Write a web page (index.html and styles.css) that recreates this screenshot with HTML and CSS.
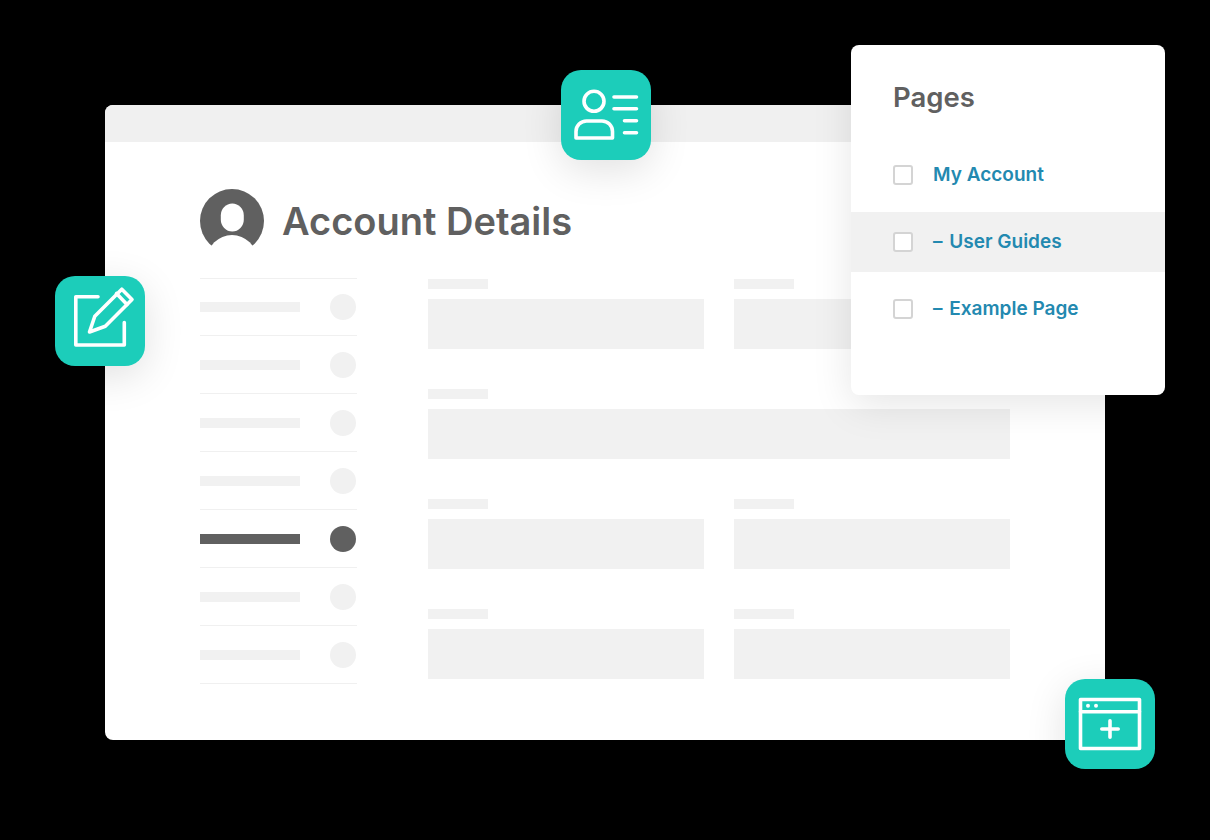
FILE: index.html
```html
<!DOCTYPE html>
<html lang="en">

<head>
  <meta charset="UTF-8" />
  <title>Account Details</title>
  <link rel="stylesheet" href="styles.css">
</head>

<body>
  <div class="stage">
    <main class="window">
      <div class="window-bar"></div>
      <div class="window-body">
        <header class="account-head">
          <svg class="avatar" viewBox="0 0 64 64">
            <circle cx="32" cy="32" r="32" fill="#606060" />
            <rect x="20.800" y="14.500" width="23" height="28" rx="11.500" ry="12" fill="#fff" />
            <circle cx="32" cy="71" r="25" fill="#fff" />
          </svg>
          <h1>Account Details</h1>
        </header>
        <div class="account-content">
          <ul class="side-list">
            <li><span class="side-bar"></span><span class="side-dot"></span></li>
            <li><span class="side-bar"></span><span class="side-dot"></span></li>
            <li><span class="side-bar"></span><span class="side-dot"></span></li>
            <li><span class="side-bar"></span><span class="side-dot"></span></li>
            <li class="active"><span class="side-bar"></span><span class="side-dot"></span></li>
            <li><span class="side-bar"></span><span class="side-dot"></span></li>
            <li><span class="side-bar"></span><span class="side-dot"></span></li>
          </ul>
          <div class="form-grid">
            <div class="field"><span class="field-label"></span><span class="field-input"></span></div>
            <div class="field"><span class="field-label"></span><span class="field-input"></span></div>
            <div class="field wide"><span class="field-label"></span><span class="field-input"></span></div>
            <div class="field"><span class="field-label"></span><span class="field-input"></span></div>
            <div class="field"><span class="field-label"></span><span class="field-input"></span></div>
            <div class="field"><span class="field-label"></span><span class="field-input"></span></div>
            <div class="field"><span class="field-label"></span><span class="field-input"></span></div>
          </div>
        </div>
      </div>
    </main>

    <!-- Floating panel -->
    <aside class="pages-panel">
      <h2>Pages</h2>
      <ul class="pages-list">
        <li><span class="check"></span><span class="page-name">My Account</span></li>
        <li class="hover"><span class="check"></span><span class="page-name"><span class="dash">– </span>User Guides</span></li>
        <li><span class="check"></span><span class="page-name"><span class="dash">– </span>Example Page</span></li>
      </ul>
    </aside>

    <!-- Floating icons -->
    <div class="badge badge-user">
      <svg viewBox="0 0 90 90">
        <circle cx="33" cy="31.3" r="10" />
        <path d="M15 68V61.5a10.500 10.500 0 0 1 10.500-10.500h15.500a10.500 10.500 0 0 1 10.500 10.500V68z" />
        <path d="M53 27H75.500M53 38.700H75.500M63.500 50.700H75.500M63.500 62.700H75.500" />
      </svg>
    </div>
    <div class="badge badge-edit">
      <svg viewBox="0 0 90 90">
        <path d="M43 20.800H20.800V69H69.300V46.500" />
        <path d="M34.500 56L39.800 40.200L66.800 13.200L77 23.500L50.300 50.300z" />
        <path d="M61.500 17.500L72 28.500" />
      </svg>
    </div>
    <div class="badge badge-add">
      <svg viewBox="0 0 90 90">
        <rect x="15.500" y="20.500" width="59" height="49" />
        <path d="M15.500 32.700H74.500M45 41.800V58.200M36.800 50H53.200" />
        <circle class="dot" cx="23" cy="26.700" r="2" />
        <circle class="dot" cx="31" cy="26.700" r="2" />
      </svg>
    </div>
  </div>
</body>

</html>
```

FILE: styles.css
```css
* { margin: 0; padding: 0; box-sizing: border-box; }
html, body { height: 100%; }
body {
  background-color: #000;
  color: #606060;
  font-family: Inter, "Open Sans", sans-serif;
  overflow: hidden;
}
ul { list-style: none; }
.stage {
  position: relative;
  width: 1210px;
  height: 840px;
  padding: 105px 105px 100px;
}
.window {
  height: 635px;
  background-color: #fff;
  border-radius: 8px;
  overflow: hidden;
}
.window-bar {
  height: 37px;
  background-color: #f0f0f0;
}
.window-body { padding: 47px 95px 0; }
.account-head {
  display: flex;
  align-items: center;
  gap: 18px;
  height: 64px;
}
.avatar { width: 64px; height: 64px; display: block; }
.account-head h1 {
  font-size: 38px;
  font-weight: 600;
  line-height: 64px;
}
.account-content {
  display: flex;
  align-items: flex-start;
  margin-top: 25px;
}
.side-list {
  width: 157px;
  border-top: 1px solid #f0f0f0;
}
.side-list li {
  display: flex;
  align-items: center;
  justify-content: space-between;
  height: 58px;
  padding-right: 1px;
  border-bottom: 1px solid #f0f0f0;
}
.side-list li:first-child { height: 57px; }
.side-bar {
  width: 100px;
  height: 10px;
  background-color: #f1f1f1;
}
.side-dot {
  width: 26px;
  height: 26px;
  border-radius: 50%;
  background-color: #f1f1f1;
}
.side-list li.active .side-bar,
.side-list li.active .side-dot { background-color: #606060; }
.form-grid {
  display: grid;
  grid-template-columns: 276px 276px;
  gap: 40px 30px;
  margin: 1px 0 0 71px;
}
.field.wide { grid-column: 1 / 3; }
.field-label {
  display: block;
  width: 60px;
  height: 10px;
  background-color: #f1f1f1;
  margin-bottom: 10px;
}
.field-input {
  display: block;
  height: 50px;
  background-color: #f1f1f1;
}

/* Pages panel */
.pages-panel {
  position: absolute;
  left: 851px;
  top: 45px;
  width: 314px;
  height: 350px;
  background-color: #fff;
  border-radius: 8px;
  box-shadow: 0 10px 40px rgba(0, 0, 0, 0.1);
  padding-top: 33px;
}
.pages-panel h2 {
  font-size: 27.5px;
  font-weight: 600;
  line-height: 38px;
  margin-left: 42px;
}
.pages-list { margin-top: 29px; }
.pages-list li {
  display: flex;
  align-items: center;
  gap: 20px;
  height: 60px;
  margin-bottom: 7px;
  padding-left: 42px;
  color: #2389b0;
  font-size: 19px;
  font-weight: 600;
}
.pages-list li.hover { background-color: #f1f1f1; }
.page-name { margin-bottom: 2px; }
.dash { margin-right: 2px; }
.check {
  width: 20px;
  height: 20px;
  border: 2px solid #d4d4d4;
  border-radius: 3px;
  background-color: #fff;
}

/* Floating icons */
.badge {
  position: absolute;
  width: 90px;
  height: 90px;
  border-radius: 20px;
  background-color: #1ccdba;
  box-shadow: 0 10px 40px rgba(0, 0, 0, 0.12);
}
.badge svg {
  display: block;
  width: 90px;
  height: 90px;
  fill: none;
  stroke: #fff;
  stroke-width: 3.6;
  stroke-linecap: round;
  stroke-linejoin: round;
}
.badge svg .dot { fill: #fff; stroke: none; }
.badge-user { left: 561px; top: 70px; }
.badge-edit { left: 55px; top: 276px; }
.badge-add { left: 1065px; top: 679px; }
```
